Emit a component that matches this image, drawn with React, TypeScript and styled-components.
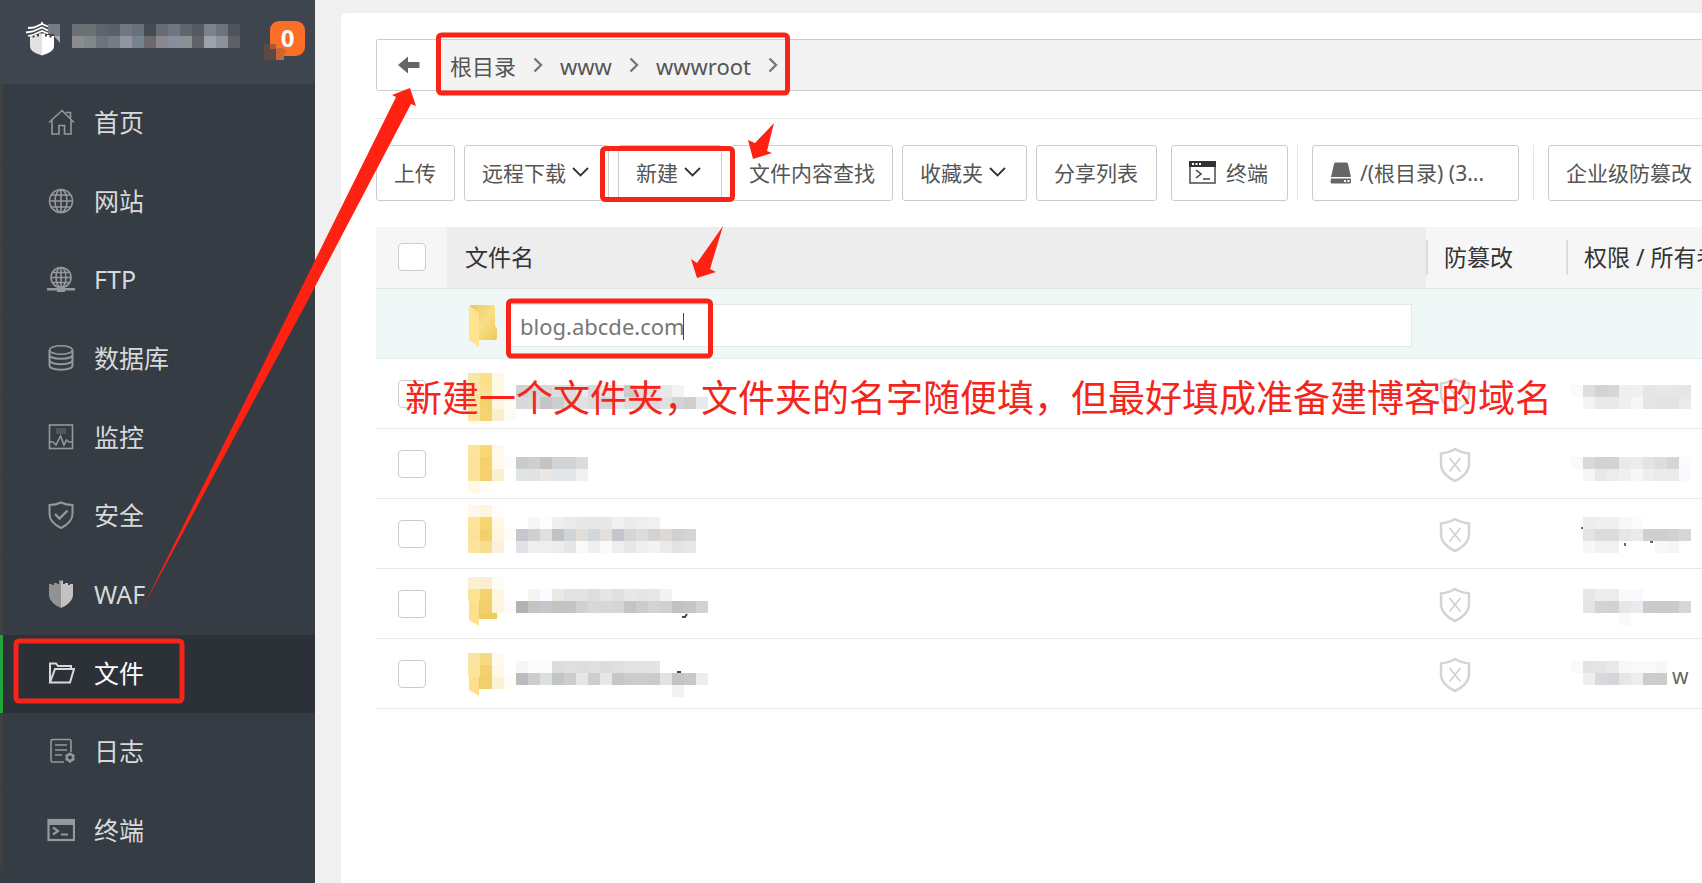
import React from "react";
import styled, { createGlobalStyle, css } from "styled-components";

const Global = createGlobalStyle`
  * { box-sizing: border-box; }
  html, body { margin: 0; padding: 0; }
  body {
    background: #f0f0f0;
    color: #555;
    font-family: "Noto Sans", "Noto Sans CJK SC", sans-serif;
    overflow: hidden;
  }
  button, input { font-family: inherit; }
  ul { list-style: none; margin: 0; padding: 0; }
`;

const Page = styled.div`
  position: relative;
  display: flex;
  min-height: 100vh;
`;

/* ---------- sidebar ---------- */

const Sidebar = styled.aside`
  flex: 0 0 315px;
  display: flex;
  flex-direction: column;
  background: #353c43;
`;

const Brand = styled.header`
  flex: 0 0 84px;
  display: flex;
  align-items: flex-start;
  padding: 20px 10px 0 24px;
  background: #3e454e;
`;

const MaskedName = styled.div`
  margin: 4px 0 0 8px;
`;

const Count = styled.span`
  position: relative;
  margin: 1px 0 0 auto;
  width: 35px;
  height: 35px;
  border-radius: 9px;
  background: #fc6d26;
  color: #fff;
  font: bold 24px/33px "Open Sans", sans-serif;
  text-align: center;
`;

const CountMask = styled.svg`
  position: absolute;
  left: -6px;
  top: 23px;
`;

const Nav = styled.nav`
  flex: 1;
  display: flex;
  padding-bottom: 12px;
`;

const NavList = styled.ul`
  flex: 1;
  display: flex;
  flex-direction: column;
`;

const NavItem = styled.li`
  flex: 1 0 auto;
  min-height: 60px;
  display: flex;
`;

const NavLink = styled.a<{ $active?: boolean }>`
  flex: 1;
  display: flex;
  align-items: center;
  gap: 19px;
  margin-bottom: 1px;
  padding: 0 0 2px 44px;
  border-left: 3px solid ${(p) => (p.$active ? "#20a53a" : "#3f403f")};
  background: ${(p) => (p.$active ? "#2c3138" : "transparent")};
  color: ${(p) => (p.$active ? "#fff" : "#d8d9da")};
  font-size: 25px;
  line-height: 32px;
  text-decoration: none;
  svg { flex: none; color: ${(p) => (p.$active ? "#d8d8d8" : "#96999c")}; }
`;

/* ---------- main ---------- */

const Main = styled.main`
  flex: 1;
  min-width: 0;
  padding: 13px 0 0 26px;
  display: flex;
`;

const Card = styled.section`
  flex: 1;
  min-width: 0;
  padding: 26px 0 0 35px;
  background: #fff;
  border-top-left-radius: 6px;
  overflow: hidden;
`;

const PathBar = styled.div`
  display: flex;
  height: 52px;
  border: 1px solid #ccc;
  border-right: 0;
  border-radius: 3px 0 0 3px;
  background: #f3f3f3;
`;

const Back = styled.button`
  width: 60px;
  padding: 0 0 0 4px;
  border: 0;
  border-right: 1px solid #ccc;
  background: #fff;
  display: grid;
  place-items: center;
`;

const Crumbs = styled.ol`
  display: flex;
  align-items: center;
  gap: 17px;
  margin: 0;
  padding: 0 0 0 13px;
  list-style: none;
  li { display: flex; align-items: center; gap: 17px; }
`;

const CrumbLink = styled.a`
  color: #555;
  font-size: 22px;
  line-height: 30px;
  padding-top: 2px;
  text-decoration: none;
`;

const Rule = styled.hr`
  margin: 27px 0 26px;
  border: 0;
  border-top: 1px solid #eaeaea;
`;

const Toolbar = styled.div`
  display: flex;
  height: 56px;
  gap: 9px;
  white-space: nowrap;
`;

const Tool = styled.button<{ $w?: number; $gap?: number; $apart?: boolean }>`
  flex: none;
  display: flex;
  align-items: center;
  gap: ${(p) => p.$gap ?? 6}px;
  width: ${(p) => (p.$w ? p.$w + "px" : "auto")};
  margin-left: ${(p) => (p.$apart ? "5px" : 0)};
  padding: 0 17px;
  border: 1px solid #ccc;
  border-radius: 3px;
  background: #fff;
  color: #555;
  font-size: 21px;
  line-height: 30px;
`;

const Split = styled.i<{ $apart?: boolean }>`
  flex: none;
  width: 1px;
  margin-left: ${(p) => (p.$apart ? "5px" : 0)};
  background: #e5e5e5;
`;

const FileTable = styled.table`
  width: 100%;
  margin-top: 26px;
  border-collapse: separate;
  border-spacing: 0;
  table-layout: fixed;
`;

const Head = styled.th<{ $name?: boolean; $bar?: boolean }>`
  height: 62px;
  padding: 0 0 2px 18px;
  border-bottom: 1px solid #e4e7e6;
  background-color: ${(p) => (p.$name ? "#ededed" : "#f6f6f6")};
  color: #333;
  font-size: 23px;
  font-weight: 400;
  line-height: 32px;
  text-align: left;
  white-space: nowrap;
  ${(p) => p.$bar && css`
    background-image: linear-gradient(#ddd, #ddd);
    background-size: 2px 35px;
    background-repeat: no-repeat;
    background-position: 0 13px;
  `}
`;

const Cell = styled.td<{ $fresh?: boolean }>`
  height: 70px;
  padding: 0 0 0 18px;
  border-bottom: 1px solid ${(p) => (p.$fresh ? "#deeeea" : "#e8e8e8")};
  background: ${(p) => (p.$fresh ? "#eff8f6" : "#fff")};
  vertical-align: middle;
  svg { display: block; }
`;

const FileCell = styled(Cell)`
  padding-left: 21px;
`;

const GuardCell = styled(Cell)`
  padding: 2px 0 0 13px;
`;

const OwnerCell = styled(Cell)`
  padding-left: 5px;
`;

const Inline = styled.div`
  display: flex;
  align-items: center;
`;

const Tail = styled.span`
  padding: 4px 0 0 5px;
  color: #666;
  font-size: 21px;
  line-height: 30px;
`;

const Check = styled.input`
  appearance: none;
  display: block;
  width: 28px;
  height: 28px;
  margin: 0 0 0 4px;
  border: 1px solid #ccc;
  border-radius: 4px;
  background: #fff;
`;

const NameEdit = styled.div`
  display: flex;
  align-items: center;
  gap: 11px;
  padding: 4px 14px 0 3px;
`;

const NameInput = styled.input`
  flex: 1;
  min-width: 0;
  height: 43px;
  padding: 0 9px;
  border: 1px solid #e6e6e6;
  background: #fff;
  color: #777;
  font-size: 22px;
  line-height: 30px;
  outline: none;
`;

/* ---------- annotations drawn over the page ---------- */

const Marks = styled.svg`
  position: absolute;
  left: 0;
  top: 0;
  pointer-events: none;
`;

const Note = styled.p`
  position: absolute;
  left: 405px;
  top: 373px;
  margin: 0;
  color: #f5251b;
  font-size: 37px;
  line-height: 50px;
  white-space: nowrap;
  pointer-events: none;
`;

/* ---------- icons ---------- */

const line = { fill: "none", stroke: "currentColor", strokeWidth: 1.6 } as const;

const Icon = ({ children }: { children: React.ReactNode }) => (
  <svg width="28" height="28" viewBox="0 0 28 28" aria-hidden="true">{children}</svg>
);

const HomeIcon = () => (
  <Icon>
    <path {...line} d="M2 14.5 15 2.5 27 14.5M5 12.5V26H12V17.5H17.5V26H24V12.5M19.5 5V4.5H23.5V10" />
  </Icon>
);
const GlobeIcon = () => (
  <Icon>
    <circle {...line} cx="14" cy="14" r="11.5" />
    <ellipse {...line} cx="14" cy="14" rx="6" ry="11.5" />
    <path {...line} d="M14 2.5V25.5M2.5 14H25.5M4.5 8H23.5M4.5 20H23.5" />
  </Icon>
);
const FtpIcon = () => (
  <Icon>
    <circle {...line} cx="14" cy="12.5" r="10" />
    <ellipse {...line} cx="14" cy="12.5" rx="5" ry="10" />
    <path {...line} d="M14 2.5V23M4 12.5H24M5.5 7.5H22.5M5.5 17.5H22.5" />
    <path d="M0 23H10V21.5H18V23H28V25.5H18V27H10V25.5H0Z" fill="currentColor" />
  </Icon>
);
const DbIcon = () => (
  <Icon>
    <ellipse {...line} cx="14" cy="6" rx="11.5" ry="4.2" />
    <path {...line} strokeWidth={2} d="M2.5 6V21.5C2.5 27 25.5 27 25.5 21.5V6M2.5 11C2.5 16 25.5 16 25.5 11M2.5 16C2.5 21.5 25.5 21.5 25.5 16" />
  </Icon>
);
const MonitorIcon = () => (
  <Icon>
    <rect {...line} x="2.5" y="2" width="23" height="23.5" />
    <path d="M9 5H19V11H9Z" fill="currentColor" opacity=".3" />
    <path {...line} d="M3 19H6L9 22 13.5 13 17 22 19.5 17 22 19H25" />
  </Icon>
);
const SafeIcon = () => (
  <Icon>
    <path {...line} strokeWidth={2} d="M14 1.5C17 3 21 4 25.5 4V13C25.5 19 20 24 14 27 8 24 2.5 19 2.5 13V4C7 4 11 3 14 1.5Z" />
    <path {...line} strokeWidth={2.4} d="M8 13 12.5 17.5 20.5 9.5" />
  </Icon>
);
const WafIcon = () => (
  <Icon>
    <path fill="#929292" d="M2 4H5V5H7V3H10V4H12V0.500H14V28C7 25 2 20 2 15Z" />
    <path fill="#c2c2c2" d="M26 4H23V5H21V3H18V4H16V0.500H14V28C21 25 26 20 26 15Z" />
  </Icon>
);
const FolderIcon = () => (
  <Icon>
    <path {...line} strokeWidth={2} d="M3 23.5V4.5H9L11 7H24V10M3 23.5 8 10H27L23 23.5Z" />
  </Icon>
);
const LogIcon = () => (
  <Icon>
    <path {...line} d="M17 25H5.5Q4 25 4 23.5V4Q4 2.5 5.5 2.5H22.5Q24 2.5 24 4V15M8 8H20M8 13H20M8 18H15" />
    <circle {...line} strokeWidth={2.5} cx="23" cy="20.5" r="3.2" />
    <path {...line} d="M23 15.5V17M23 24V26M18.5 18 20 19M26 22 27.5 23M18.5 23 20 22M26 19 27.5 18" />
  </Icon>
);
const ConsoleIcon = () => (
  <Icon>
    <rect {...line} strokeWidth={2.2} x="1.5" y="4" width="25.5" height="20" />
    <path d="M1 3H27V9H1Z" fill="currentColor" />
    <path {...line} strokeWidth={2.2} d="M6 11.5 11 15 6 18.5M14 18.5H21" />
  </Icon>
);
const Logo = () => (
  <svg width="40" height="38" viewBox="0 0 40 38" aria-hidden="true">
    <path fill="#767c83" d="M24 4H36V16H30V14H24Z" />
    <path fill="#a5a8ad" d="M30 16H36V23Z" />
    <g fill="none" stroke="#fff" strokeWidth="1.800">
      <path d="M4 8 10 7.500 18 4 24 6.500M18 2V5M2 12.500 9 11.500 18 7.500 24 10.500M4 16 10 14.500 18 11 24 13.500" />
    </g>
    <path fill="#e2e2e2" d="M6 16H8.500V17.500H10.500V15H13V16.500H15V13.500H18V35.500C11 33 6 31 6 26Z" />
    <path fill="#fff" d="M30 16H27.500V17.500H25.500V15H23V16.500H21V13.500H18V35.500C25 33 30 31 30 26Z" />
  </svg>
);

const Chevron = () => (
  <svg width="17" height="12" viewBox="0 0 17 12" aria-hidden="true">
    <path d="M1 1 8.5 8.500 16 1" fill="none" stroke="#333" strokeWidth="1.800" />
  </svg>
);
const Angle = () => (
  <svg width="10" height="16" viewBox="0 0 10 16" aria-hidden="true">
    <path d="M1.5 1.5 8 8 1.5 14.5" fill="none" stroke="#777" strokeWidth="2.4" />
  </svg>
);
const BackIcon = () => (
  <svg width="22" height="18" viewBox="0 0 22 18" aria-hidden="true">
    <path d="M0 9 10 0.5V6H21.5V12H10V17.5Z" fill="#666" />
  </svg>
);
const TerminalIcon = () => (
  <svg width="28" height="24" viewBox="0 0 28 24" aria-hidden="true">
    <rect x="1" y="1" width="25" height="21" fill="#fff" stroke="#555" strokeWidth="1.6" />
    <path d="M0 0H27V6H0Z" fill="#333" />
    <path d="M3 3H5M6.5 3H8.5M10 3H12" stroke="#fff" strokeWidth="1.8" />
    <path d="M7 9 12 13 7 17M14 18H21" fill="none" stroke="#444" strokeWidth="1.6" />
  </svg>
);
const DiskIcon = () => (
  <svg width="22" height="22" viewBox="0 0 22 22" aria-hidden="true">
    <path d="M4 2Q4 0.500 5.500 0.500H16.500Q18 0.500 18 2L21 15H1Z" fill="#666" />
    <path d="M1 16.5H21V20Q21 21.5 19.5 21.5H2Q0.5 21.5 0.5 20Z" fill="#666" />
    <path d="M14 18H16V20H14ZM17.5 18H19.5V20H17.5Z" fill="#fff" />
  </svg>
);
const OpenFolder = () => (
  <svg width="31" height="44" viewBox="0 0 31 44" aria-hidden="true">
    <defs>
      <linearGradient id="folderBack" x1="0" y1="0" x2="1" y2="1">
        <stop offset="0" stopColor="#e9c765" />
        <stop offset=".5" stopColor="#fadf87" />
        <stop offset="1" stopColor="#eec75a" />
      </linearGradient>
    </defs>
    <path d="M2 1H25Q27 1 27 3V22L29 25V34Q29 36 27 36H10Z" fill="url(#folderBack)" />
    <path d="M1 1.5 11 9V43L1 36Z" fill="#ffe38f" />
  </svg>
);
const ShieldX = () => (
  <svg width="32" height="36" viewBox="0 0 32 36" aria-hidden="true">
    <path d="M16 2C20 4.5 25 6 30 6.5V17C30 25 23 31 16 34 9 31 2 25 2 17V6.5C7 6 12 4.500 16 2Z" fill="none" stroke="#d4d4d4" strokeWidth="2.5" />
    <path d="M10.5 11 21.5 24.5M21.5 11 10.5 24.5" stroke="#d0d0d0" strokeWidth="1.6" />
  </svg>
);

/* Mosaic of 12px tiles; each row lists tile colours, "-" leaves a gap.
   `from` is the height in the drawing at which the first row starts. */
type MosaicProps = { rows: string[]; width: number; height: number; from?: number; children?: React.ReactNode };

const Mosaic = ({ rows, width, height, from = 0, children }: MosaicProps) => (
  <svg width={width} height={height} viewBox={`0 0 ${width} ${height}`} aria-hidden="true">
    {children}
    <g shapeRendering="crispEdges">
      {rows.map((row, y) =>
        row.split(" ").map((c, x) =>
          c === "-" ? null : (
            <rect key={`${x}-${y}`} x={x * 12} y={from + y * 12} width="12" height="12" fill={`#${c}`} />
          )
        )
      )}
    </g>
  </svg>
);

/* ---------- data ---------- */

const nav = [
  { label: "首页", icon: <HomeIcon /> },
  { label: "网站", icon: <GlobeIcon /> },
  { label: "FTP", icon: <FtpIcon /> },
  { label: "数据库", icon: <DbIcon /> },
  { label: "监控", icon: <MonitorIcon /> },
  { label: "安全", icon: <SafeIcon /> },
  { label: "WAF", icon: <WafIcon /> },
  { label: "文件", icon: <FolderIcon />, active: true },
  { label: "日志", icon: <LogIcon /> },
  { label: "终端", icon: <ConsoleIcon /> },
];

const brandTiles = [
  "6b6f76 6b7174 5e646c 5a6068 74777f 6a717b 444b53 686c74 6f7681 60656b 555a62 7b8289 6c737a 505359",
  "8b8c91 7f8788 6b737e 757b83 9295a0 76828f 69696e 8a888e 858f9f 8c8f94 606266 9aa2aa 8a929a 5e6164",
];

type FileRow = {
  folder: string[];
  folderFrom: number;
  tiles: string[];
  owner: string[];
  from: number;
  flap?: boolean;
  marks?: string;
  ownerMarks?: string;
  tail?: string;
};

const files: FileRow[] = [
  {
    folderFrom: 9,
    from: 21,
    folder: ["fae6a3 fbdf88 fef9e5 -", "fbe6a8 fbe092 fef9e5 -", "fae39a f4d26a fdf6e0 fffcf5", "fbe5a0 f5d36e faeecb fdfbf5", "fef8e8 fffdf5 - -"],
    tiles: ["cdd2d6 d5d6da d8d8d9 dcdddf dedede e8e9eb d9dadb e5e6e7 e9e9e9 c9caca dddddd e4e4e4 e8e8e8 f3f3f3 - -", "d6dadd dadada c4c5c7 cccdd0 dadada e1e1e1 dcdcdc d2d4d5 e7e7e7 dddddd dedede dadcdc dfe1e1 d3d4d4 cfd0ce e8e9ea"],
    owner: ["fafafa dededd d2d3d6 d6d6d7 f1efee eff0f2 e4e5e5 e6e7e7 e8e7e5 e5e6e7", "- f4f4f4 e8e9eb e9e9e9 efefee f6f7f8 e3e5e6 e2e3e4 e1e4e3 e9eaeb"],
    marks: "M32 43H36M75 22H77M116 23V25M137 23V25M155 24V27",
  },
  {
    folderFrom: 11,
    from: 23,
    folder: ["fde499 f8d774 fef9e8 -", "fbe39b f4d16c fffae6 fdfcfc", "fbe39b f4d16c fbf0ce -", "fff8e6 fffdf7 - -"],
    tiles: ["c7cccd cfcfcf c5c4c3 d0d4d6 d1d3d6 dbdddd", "e1e4e4 e1e3e3 e9e8e7 e4e6e8 e5e6e8 f1f1f1"],
    owner: ["fafafa d9d9d9 d0d2d6 d3d3d4 ebe9e7 eaedec e3e3e3 dddddf d5d5d6 f9fbfe", "- f6f6f6 e8e8e9 ececed f0f0f0 f6f7f6 efeeec eaeaea e9eaeb f9fafd"],
  },
  {
    folderFrom: 1,
    from: 13,
    folder: ["fef7ea fff4e0 fffdfa -", "fce49a f6d672 fff8e4 -", "fae29a f3d06a fff5df fffcf7", "fae4a0 f7dd8e fcf1d8 -"],
    tiles: ["- f7f7f7 fdfdfd efeff0 ebebec e8e8e9 e6e8e8 e5e7ea f1f1f1 ebebeb eeeeee f0f0f0", "c4c8ce d0d0cf e1dedc c1c2c3 d0d3d7 e1deda d3d8dd e3dfdc c5c6cb d3d6d5 dbdcdc d3d3d2 dcd9d6 d0d0d0 d2d5d8", "dfe3e8 f0eff0 eeeeee ececec e5e6e8 f9faf7 efefef fafafa eeeeee e5e8e7 efefef f3f3f3 e9eaea e2e4e4 e6e7e9"],
    owner: ["- ededed efeff0 efefef f8f8f8 f9fbfe", "- e4e4e3 d9dbdd dcdcdd e8e7e6 ebebeb cfcfcf cfcfce d2d1cf d6d6d6", "- f7f7f7 f1f2f3 f2f2f2 - - - f8f8f8 f5f5f5"],
    ownerMarks: "M11 23V25M54 39V42M79 38H82M88 38H91M116 28 114 34",
  },
  {
    folderFrom: 3,
    from: 15,
    folder: ["fcf0d2 fceed0 fefcf8 -", "fde391 f5d270 fff7df -", "- f3cf69 fff4dd fdfbf7"],
    tiles: ["- f4f4f3 fafcff e9e9e8 e3e3e3 e3e3e3 dededf e4e5e5 e0e0e0 e8e8e8 e5e5e5 e7e7e8 f1f3f5", "b2b3b6 c7c4bf c3c8ce c5c3bf c2c5c8 d1d1d1 d9d8d7 d7d7d8 d4d6d5 c4c4c3 ccccca d3d3d2 cfd0cf c4c1bf c7c6c4 d0d2d6"],
    owner: ["- e7e7e7 ececed ebeced fcf9f6 f8faff", "- e6e4e3 d1d3d4 d2d2d3 e7e7e7 ebebec cacbcd cac9c8 cacbc9 d6d7d9", "- - - - f9f9f9"],
    flap: true,
    marks: "M166 43H169L171 40",
  },
  {
    folderFrom: 9,
    from: 17,
    folder: ["f9e4a4 f6da84 fffaf0 -", "fce49a f3d16c fff8e4 -", "- f3cf69 fcf1d0 fffcf7"],
    tiles: ["f6f6f6 fcfcfc fafbfb d9dddd dfdfdf dddddd e0e0e0 dddcda dfdfdf e3e3e3 e6e4e1 e2e5e4", "bcbcc0 cccccb dae0e0 c4c4c3 cdcdcc e6e6e6 cecece e6e8e6 c7c7c6 cacccb cccccc cbcbcc e2e2e2 c5c4c4 c8c8c7 ebedef", "- - - - - - - - - - - - - f2f2f2"],
    owner: ["fafafa e5e4e2 e3e5e6 e8e9ea f8f7f6 f8f9fc fafafa f8f7f5", "- eeeeee d8d9dc d4d5d9 e7e7e7 ecedee cdcccc cdccca"],
    flap: true,
    marks: "M161 28H165",
    tail: "w",
  },
];

export default function App() {
  return (
    <Page>
      <Global />
      <Sidebar>
        <Brand>
          <Logo />
          <MaskedName><Mosaic rows={brandTiles} width={168} height={24} /></MaskedName>
          <Count>
            0
            <CountMask width="24" height="16" aria-hidden="true">
              <path d="M0 0H12V16H0Z" fill="#5f4a43" />
              <path d="M6 0H12V5H6Z" fill="#a65a3c" />
              <path d="M12 4H18L21 6 23 7 20 10V16H12Z" fill="#ca6538" />
            </CountMask>
          </Count>
        </Brand>
        <Nav>
          <NavList>
            {nav.map((n) => (
              <NavItem key={n.label}>
                <NavLink href="#" $active={n.active}>{n.icon}{n.label}</NavLink>
              </NavItem>
            ))}
          </NavList>
        </Nav>
      </Sidebar>

      <Main>
        <Card>
          <PathBar>
            <Back aria-label="返回"><BackIcon /></Back>
            <Crumbs>
              {["根目录", "www", "wwwroot"].map((c) => (
                <li key={c}><CrumbLink href="#">{c}</CrumbLink><Angle /></li>
              ))}
            </Crumbs>
          </PathBar>
          <Rule />
          <Toolbar>
            <Tool $w={79}>上传</Tool>
            <Tool $w={145}>远程下载<Chevron /></Tool>
            <Tool $w={104}>新建<Chevron /></Tool>
            <Tool $w={162}>文件内容查找</Tool>
            <Tool $w={125}>收藏夹<Chevron /></Tool>
            <Tool $w={121}>分享列表</Tool>
            <Tool $w={117} $gap={9} $apart><TerminalIcon />终端</Tool>
            <Split />
            <Tool $w={207} $gap={8} $apart><DiskIcon />/(根目录) (3...</Tool>
            <Split $apart />
            <Tool $w={180} $apart>企业级防篡改</Tool>
          </Toolbar>

          <FileTable>
            <colgroup>
              <col style={{ width: 71 }} />
              <col />
              <col style={{ width: 140 }} />
              <col style={{ width: 136 }} />
            </colgroup>
            <thead>
              <tr>
                <Head><Check type="checkbox" aria-label="全选" /></Head>
                <Head $name>文件名</Head>
                <Head $bar>防篡改</Head>
                <Head $bar>权限 / 所有者</Head>
              </tr>
            </thead>
            <tbody>
              <tr>
                <Cell $fresh />
                <Cell $fresh>
                  <NameEdit>
                    <OpenFolder />
                    <NameInput aria-label="文件夹名称" defaultValue="blog.abcde.com" />
                  </NameEdit>
                </Cell>
                <Cell $fresh />
                <Cell $fresh />
              </tr>
              {files.map((f, i) => (
                <tr key={i}>
                  <Cell><Check type="checkbox" aria-label={`选择第 ${i + 1} 项`} /></Cell>
                  <FileCell>
                    <Inline>
                      <Mosaic rows={f.folder} from={f.folderFrom} width={48} height={60}>
                        {f.flap && (
                          <>
                            <path d="M11 26 23 30 29 37V45H11Z" fill="#efca5e" />
                            <path d="M1 24H11V52L1 46Z" fill="#ffe08a" />
                          </>
                        )}
                      </Mosaic>
                      <Mosaic rows={f.tiles} from={f.from} width={192} height={60}>
                        {f.marks && <path d={f.marks} fill="none" stroke="#444" strokeWidth="2" />}
                      </Mosaic>
                    </Inline>
                  </FileCell>
                  <GuardCell><ShieldX /></GuardCell>
                  <OwnerCell>
                    <Inline>
                      <Mosaic rows={f.owner} from={f.from} width={f.tail ? 96 : 120} height={60}>
                        {f.ownerMarks && <path d={f.ownerMarks} fill="none" stroke="#666" strokeWidth="2" />}
                      </Mosaic>
                      {f.tail && <Tail>{f.tail}</Tail>}
                    </Inline>
                  </OwnerCell>
                </tr>
              ))}
            </tbody>
          </FileTable>
        </Card>
      </Main>

      <Note>新建一个文件夹，文件夹的名字随便填，但最好填成准备建博客的域名</Note>
      <Marks width="1702" height="883" viewBox="0 0 1702 883" aria-hidden="true">
        <g fill="none" stroke="#f82417" strokeWidth="5">
          <rect x="438.500" y="35" width="349" height="58" rx="3" />
          <rect x="602.500" y="148.500" width="130" height="51" rx="3" />
          <rect x="508.500" y="301" width="202" height="55" rx="3" />
          <rect x="16" y="641" width="166" height="60" rx="3" />
        </g>
        <g fill="#ff2212">
          <path d="M142 609 396 97 392 95 410 88 416 106 411 104 308 300Z" />
          <path d="M774 123 755 143 748 140 753 159 772 153 767 151Z" />
          <path d="M723 226 697 263 691 259 697 278 716 272 710 269Z" />
        </g>
        <path d="M683.500 313V340" stroke="#444" />
      </Marks>
    </Page>
  );
}
